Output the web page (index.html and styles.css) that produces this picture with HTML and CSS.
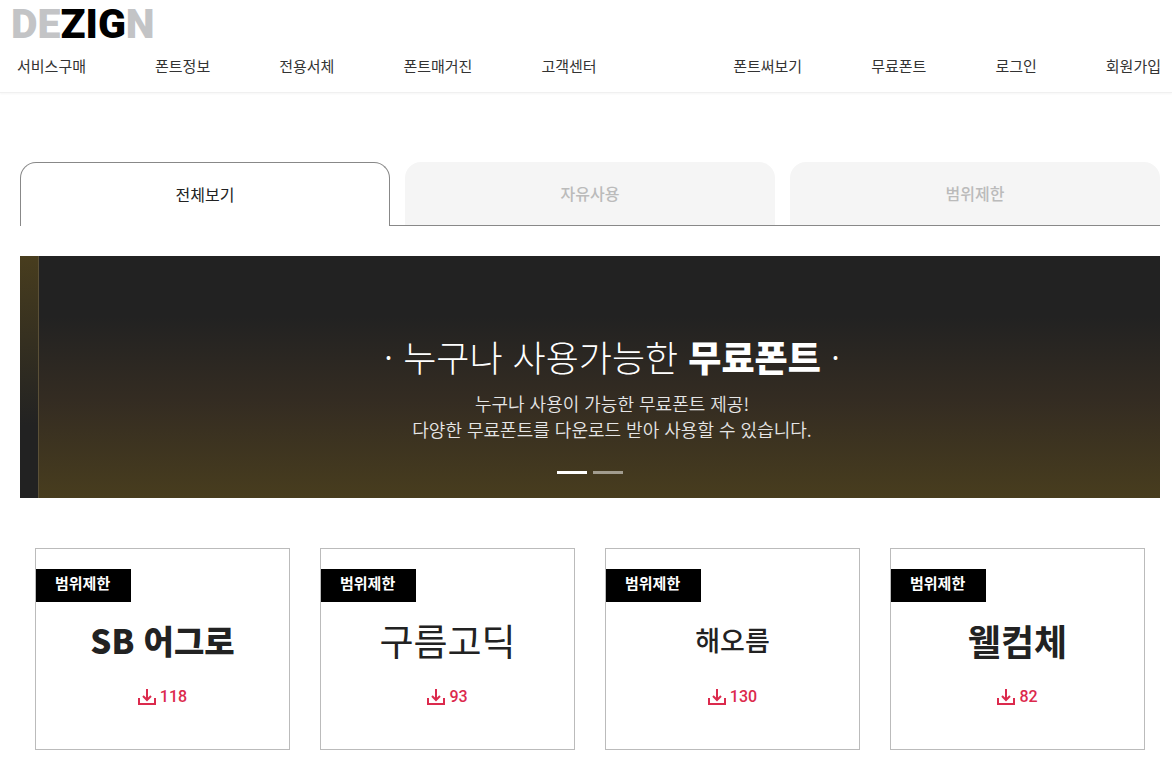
FILE: index.html
```html
<!DOCTYPE html>
<html lang="ko">
<head>
  <meta charset="UTF-8" />
  <meta name="viewport" content="width=device-width, initial-scale=1.0"/>
  <title>DEZIGN - 무료폰트</title>
  <link rel="stylesheet" href="styles.css">
</head>
<body>
  <header class="header">
    <a class="logo" href="#">DE<span>ZIG</span>N</a>
    <nav class="nav">
      <div class="menu">
        <a href="#">서비스구매</a>
        <a href="#">폰트정보</a>
        <a href="#">전용서체</a>
        <a href="#">폰트매거진</a>
        <a href="#">고객센터</a>
      </div>
      <div class="menu">
        <a href="#">폰트써보기</a>
        <a href="#">무료폰트</a>
        <a href="#">로그인</a>
        <a href="#">회원가입</a>
      </div>
    </nav>
  </header>

  <main class="container">
    <div class="tabs">
      <button class="tab active" type="button">전체보기</button>
      <button class="tab" type="button">자유사용</button>
      <button class="tab" type="button">범위제한</button>
    </div>

    <section class="banner">
      <div class="prev-slide"></div>
      <div class="slide">
        <h1>· 누구나 사용가능한 <b>무료폰트</b> ·</h1>
        <p>누구나 사용이 가능한 무료폰트 제공!<br>다양한 무료폰트를 다운로드 받아 사용할 수 있습니다.</p>
      </div>
      <div class="dots">
        <button class="dot on" type="button" aria-label="1"></button>
        <button class="dot" type="button" aria-label="2"></button>
      </div>
    </section>

    <section class="cards">
      <a class="card" href="#">
        <span class="tag">범위제한</span>
        <span class="name heavy">SB 어그로</span>
        <span class="count">
          <svg width="18" height="16" viewBox="0 0 18 16"><path d="M1 9v6h16V9M9 0v11M5 7l4 4 4-4"/></svg>
          118
        </span>
      </a>
      <a class="card" href="#">
        <span class="tag">범위제한</span>
        <span class="name gothic">구름고딕</span>
        <span class="count">
          <svg width="18" height="16" viewBox="0 0 18 16"><path d="M1 9v6h16V9M9 0v11M5 7l4 4 4-4"/></svg>
          93
        </span>
      </a>
      <a class="card" href="#">
        <span class="tag">범위제한</span>
        <span class="name hand">해오름</span>
        <span class="count">
          <svg width="18" height="16" viewBox="0 0 18 16"><path d="M1 9v6h16V9M9 0v11M5 7l4 4 4-4"/></svg>
          130
        </span>
      </a>
      <a class="card" href="#">
        <span class="tag">범위제한</span>
        <span class="name bold">웰컴체</span>
        <span class="count">
          <svg width="18" height="16" viewBox="0 0 18 16"><path d="M1 9v6h16V9M9 0v11M5 7l4 4 4-4"/></svg>
          82
        </span>
      </a>
    </section>
  </main>
</body>
</html>
```
FILE: styles.css
```css
* {
  box-sizing: border-box;
}
body {
  margin: 0;
  font-family: 'Noto Sans CJK KR', sans-serif;
  background: #fff;
  color: #222;
}
a {
  color: inherit;
  text-decoration: none;
}
button {
  padding: 0;
  border: 0;
  font-family: inherit;
  cursor: pointer;
}

/* header */
.header {
  padding: 4px 11px 14px;
  border-bottom: 1px solid #f0f0f0;
  box-shadow: 0 1px 2px rgba(0, 0, 0, 0.04);
}
.logo {
  display: block;
  width: max-content;
  font-family: Roboto, sans-serif;
  font-size: 41px;
  line-height: 40px;
  font-weight: 900;
  color: #c3c4c6;
}
.logo span {
  color: #000;
}
.nav {
  display: flex;
  justify-content: space-between;
  margin-top: 10px;
  padding-left: 6px;
}
.menu {
  display: flex;
  gap: 69px;
  font-size: 15px;
  line-height: 24px;
  color: #333;
}

/* tabs */
.container {
  padding: 69px 12px 17px 20px;
}
.tabs {
  display: grid;
  grid-template-columns: repeat(3, 1fr);
  gap: 15px;
  border-bottom: 1px solid #888;
}
.tab {
  height: 63px;
  padding-bottom: 2px;
  border-radius: 16px 16px 0 0;
  background: #f5f5f5;
  color: #bbb;
  font-size: 16px;
  font-weight: 500;
}
.tab.active {
  height: 64px;
  margin-bottom: -1px;
  border: 1px solid #888;
  border-bottom: 0;
  background: #fff;
  color: #222;
  font-weight: 400;
}

/* banner */
.banner {
  display: flex;
  position: relative;
  height: 242px;
  margin-top: 30px;
  overflow: hidden;
}
.prev-slide {
  flex: 0 0 19px;
  border-right: 1px solid #5a5037;
  background: linear-gradient(#483d1e, #222 70%);
}
.slide {
  flex: 0 0 100%;
  padding: 74px 0 0 6px;
  background: linear-gradient(#222 25%, #342c22 60%, #483d1e);
  color: #fff;
  text-align: center;
}
.slide h1 {
  margin: 0;
  font-size: 36px;
  line-height: 52px;
  font-weight: 300;
}
.slide h1 b {
  font-weight: 900;
}
.slide p {
  margin: 8px 0 0;
  font-size: 18px;
  line-height: 26px;
  font-weight: 350;
  color: #e6e6e6;
}
.dots {
  display: flex;
  position: absolute;
  left: 0;
  right: 0;
  bottom: 24px;
  justify-content: center;
  gap: 6px;
}
.dot {
  width: 30px;
  height: 3px;
  background: #fff;
  opacity: 0.5;
}
.dot.on {
  opacity: 1;
}

/* cards */
.cards {
  display: grid;
  grid-template-columns: repeat(4, 1fr);
  gap: 30px;
  margin-top: 50px;
  padding: 0 15px;
}
.card {
  display: flex;
  flex-direction: column;
  align-items: center;
  padding: 20px 0 40px;
  border: 1px solid #bbb;
}
.tag {
  align-self: flex-start;
  padding: 0 21px 5px 19px;
  background: #000;
  color: #fff;
  font-size: 15px;
  line-height: 28px;
  font-weight: 700;
}
.name {
  margin-top: 14px;
  font-size: 36px;
  line-height: 48px;
}
.heavy {
  font-size: 33px;
  font-weight: 900;
}
.gothic {
  font-size: 37px;
}
.hand {
  font-size: 27px;
  font-weight: 500;
}
.bold {
  font-weight: 700;
}
.count {
  display: flex;
  align-items: center;
  gap: 4px;
  margin-top: 21px;
  color: #dc2a4d;
  font-family: Roboto, sans-serif;
  font-size: 16px;
  line-height: 24px;
  font-weight: 500;
}
.count svg {
  fill: none;
  stroke: currentColor;
  stroke-width: 2;
}
```
